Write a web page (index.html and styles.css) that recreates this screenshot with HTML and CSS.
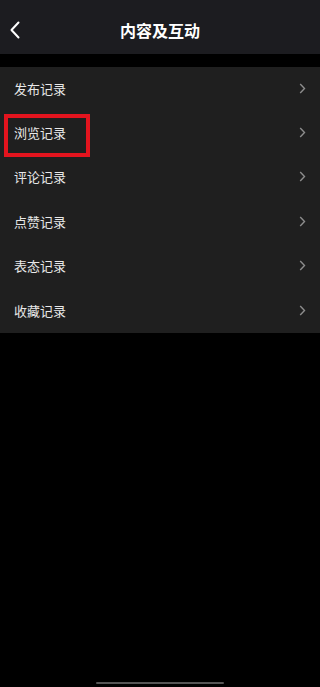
FILE: index.html
```html
<!DOCTYPE html>
<html lang="zh">
<head>
<meta charset="utf-8">
<link rel="stylesheet" href="styles.css">
</head>
<body>
<div class="screen">
  <header class="topbar">
    <svg class="back" width="12" height="18" viewBox="0 0 12 18"><path d="M9.5 1.5 L2.5 9 L9.5 16.5" fill="none" stroke="#fff" stroke-width="2" stroke-linecap="round" stroke-linejoin="round"/></svg>
    <h1 class="title">内容及互动</h1>
  </header>
  <ul class="list">
    <li class="row"><span class="label">发布记录</span><svg class="chev" width="7" height="11" viewBox="0 0 7 11"><path d="M1.2 1 L5.5 5.5 L1.2 10" fill="none" stroke="#8c8c8c" stroke-width="1.4"/></svg></li>
    <li class="row"><span class="label">浏览记录</span><svg class="chev" width="7" height="11" viewBox="0 0 7 11"><path d="M1.2 1 L5.5 5.5 L1.2 10" fill="none" stroke="#8c8c8c" stroke-width="1.4"/></svg><span class="highlight"></span></li>
    <li class="row"><span class="label">评论记录</span><svg class="chev" width="7" height="11" viewBox="0 0 7 11"><path d="M1.2 1 L5.5 5.5 L1.2 10" fill="none" stroke="#8c8c8c" stroke-width="1.4"/></svg></li>
    <li class="row"><span class="label">点赞记录</span><svg class="chev" width="7" height="11" viewBox="0 0 7 11"><path d="M1.2 1 L5.5 5.5 L1.2 10" fill="none" stroke="#8c8c8c" stroke-width="1.4"/></svg></li>
    <li class="row"><span class="label">表态记录</span><svg class="chev" width="7" height="11" viewBox="0 0 7 11"><path d="M1.2 1 L5.5 5.5 L1.2 10" fill="none" stroke="#8c8c8c" stroke-width="1.4"/></svg></li>
    <li class="row"><span class="label">收藏记录</span><svg class="chev" width="7" height="11" viewBox="0 0 7 11"><path d="M1.2 1 L5.5 5.5 L1.2 10" fill="none" stroke="#8c8c8c" stroke-width="1.4"/></svg></li>
  </ul>
  <div class="spacer"></div>
  <div class="home-bar"><span class="home-indicator"></span></div>
</div>
</body>
</html>
```
FILE: styles.css
```css
* { box-sizing: border-box; }
html, body {
  margin: 0;
  padding: 0;
  background: #000;
}
body {
  font-family: "Noto Sans CJK SC", "Noto Sans", sans-serif;
  color: #eaeaea;
}
.screen {
  width: 320px;
  height: 687px;
  display: flex;
  flex-direction: column;
  background: #000;
  overflow: hidden;
}
.topbar {
  height: 54px;
  background: #1c1c20;
  display: flex;
  align-items: center;
  justify-content: center;
  position: relative;
}
.back {
  position: absolute;
  left: 9px;
  top: 21px;
}
.title {
  margin: 0;
  font-size: 16px;
  font-weight: 700;
  color: #fff;
  line-height: 1;
  margin-top: 6px;
}
.list {
  list-style: none;
  margin: 13px 0 0;
  padding: 0;
  background: #1f1f1f;
}
.row {
  position: relative;
  height: 44.4px;
  display: flex;
  align-items: center;
  justify-content: space-between;
  padding: 0 14px 2px 14px;
}
.label {
  font-size: 13px;
  color: #e8e8e8;
  line-height: 1;
}
.chev {
  display: block;
}
.highlight {
  position: absolute;
  left: 4px;
  top: 3px;
  width: 86px;
  height: 43px;
  border: 4px solid #e3141e;
}
.spacer { flex: 1; }
.home-bar {
  height: 5px;
  display: flex;
  justify-content: center;
}
.home-indicator {
  width: 128px;
  height: 2px;
  background: #555;
  border-radius: 1px;
}
```
